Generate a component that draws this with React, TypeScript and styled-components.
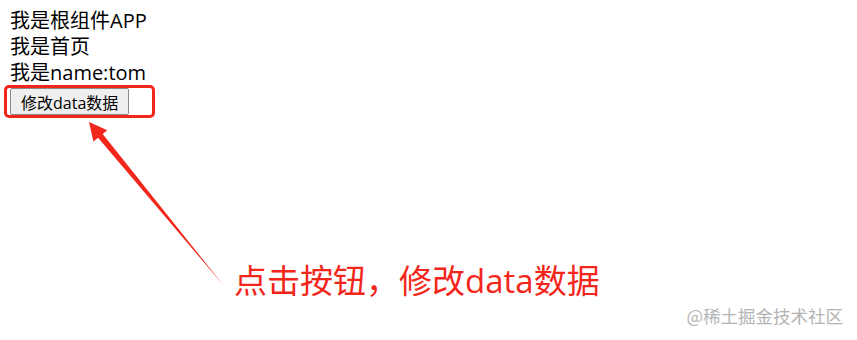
import React from 'react'
import styled, { createGlobalStyle } from 'styled-components'

const GlobalStyle = createGlobalStyle`
  html, body {
    margin: 0;
    padding: 0;
    background: #ffffff;
  }
  body {
    font-family: 'Open Sans', 'Noto Sans CJK SC', sans-serif;
  }
`

const RED = '#f3261b'

const Page = styled.div`
  position: relative;
  width: 857px;
  height: 340px;
  overflow: hidden;
  background: #ffffff;
`

const Content = styled.div`
  display: flex;
  flex-direction: column;
  align-items: flex-start;
  padding: 8px 10px 0;
`

const Line = styled.div`
  font-size: 20px;
  line-height: 26px;
  color: #000000;
  white-space: nowrap;
`

// 按钮外围的红色标注框
const Highlight = styled.div`
  position: relative;
  margin-top: 2px;
  &::after {
    content: '';
    position: absolute;
    left: -6px;
    top: -3px;
    width: 151px;
    height: 33px;
    border: 3px solid ${RED};
    border-radius: 5px;
    box-sizing: border-box;
    pointer-events: none;
  }
`

const Button = styled.button`
  display: block;
  height: 27px;
  padding: 0 10px;
  font-family: 'Open Sans', 'Noto Sans CJK SC', sans-serif;
  font-size: 16px;
  color: #000000;
  background: #efefef;
  border: 1px solid #8a8a8a;
  border-radius: 2px;
`

const Arrow = styled.svg`
  position: absolute;
  left: 0;
  top: 0;
  pointer-events: none;
`

const Caption = styled.div`
  position: absolute;
  left: 234px;
  top: 259px;
  font-family: 'Open Sans', 'Noto Sans CJK SC', sans-serif;
  font-size: 33px;
  line-height: 44px;
  color: ${RED};
  white-space: nowrap;
`

const Watermark = styled.div`
  position: absolute;
  right: 14px;
  top: 304px;
  font-family: 'Noto Sans CJK SC', sans-serif;
  font-size: 17.5px;
  line-height: 24px;
  color: #b4b4b4;
  white-space: nowrap;
`

export default function App() {
  return (
    <Page>
      <GlobalStyle />
      <Content>
        <Line>我是根组件APP</Line>
        <Line>我是首页</Line>
        <Line>我是name:tom</Line>
        <Highlight>
          <Button>修改data数据</Button>
        </Highlight>
      </Content>

      <Arrow width="857" height="340" viewBox="0 0 857 340">
        <polygon
          points="89,122 107.3,130.2 102.7,134 224,286 98.1,137.8 93.4,141.6"
          fill={RED}
        />
      </Arrow>

      <Caption>点击按钮，修改data数据</Caption>
      <Watermark>@稀土掘金技术社区</Watermark>
    </Page>
  )
}
